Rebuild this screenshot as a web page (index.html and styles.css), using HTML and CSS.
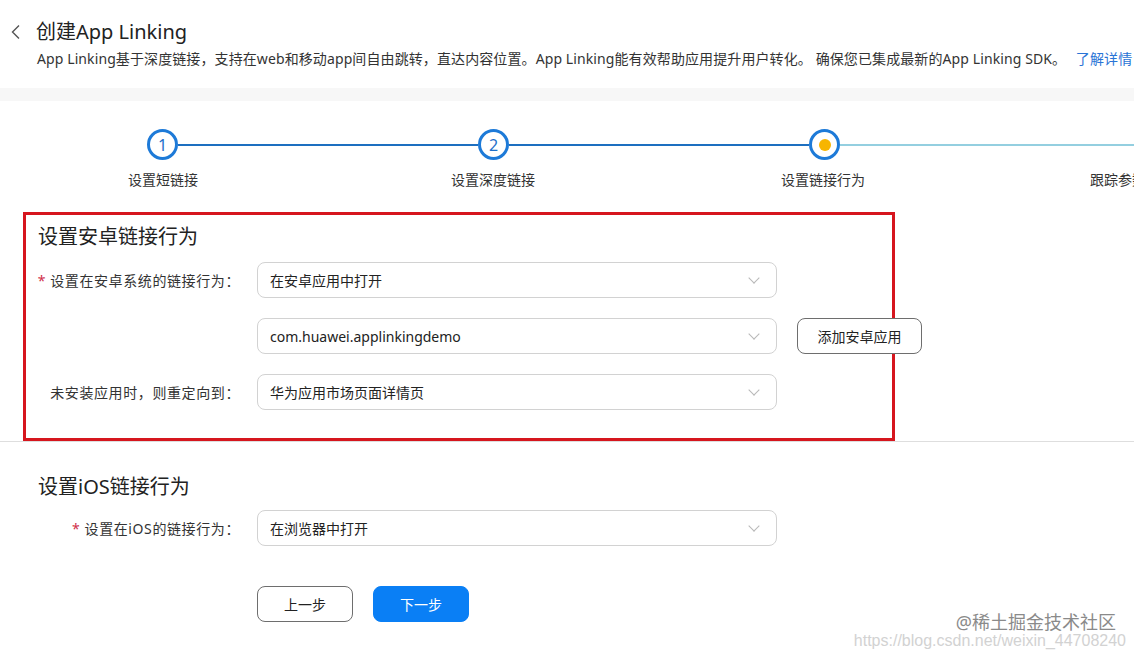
FILE: index.html
```html
<!DOCTYPE html>
<html lang="zh-CN">
<head>
    <meta charset="UTF-8">
    <meta name="viewport" content="width=device-width, initial-scale=1.0">
    <title>创建App Linking</title>
    <link rel="stylesheet" href="styles.css">
</head>
<body>
    <div class="page-header">
        <div class="title-row">
            <svg class="back-icon" width="12" height="16" viewBox="0 0 12 16"><polyline points="9,1.5 2.5,8 9,14.5" fill="none" stroke="#555" stroke-width="1.4"/></svg>
            <h1 class="title">创建App Linking</h1>
        </div>
        <p class="subtitle">App Linking基于深度链接，支持在web和移动app间自由跳转，直达内容位置。App Linking能有效帮助应用提升用户转化。 确保您已集成最新的App Linking SDK。 <a class="more-link" href="#">了解详情</a></p>
    </div>
    <div class="band"></div>

    <div class="stepper">
        <div class="track">
            <div class="dot done">1</div>
            <div class="line done"></div>
            <div class="dot done">2</div>
            <div class="line done"></div>
            <div class="dot current"><span class="dot-inner"></span></div>
            <div class="line pending"></div>
        </div>
        <div class="step-labels">
            <span>设置短链接</span>
            <span>设置深度链接</span>
            <span>设置链接行为</span>
            <span>跟踪参数及预览设置</span>
        </div>
    </div>

    <!-- android section, marked with the red frame -->
    <div class="section marked">
        <h2 class="section-title">设置安卓链接行为</h2>
        <div class="form-row">
            <label class="form-label"><i class="req">*</i> 设置在安卓系统的链接行为：</label>
            <div class="select">在安卓应用中打开<span class="chevron"></span></div>
        </div>
        <div class="form-row">
            <label class="form-label"></label>
            <div class="select">com.huawei.applinkingdemo<span class="chevron"></span></div>
            <button class="btn btn-outline btn-wide">添加安卓应用</button>
        </div>
        <div class="form-row">
            <label class="form-label">未安装应用时，则重定向到：</label>
            <div class="select">华为应用市场页面详情页<span class="chevron"></span></div>
        </div>
    </div>
    <div class="divider"></div>

    <div class="section">
        <h2 class="section-title">设置iOS链接行为</h2>
        <div class="form-row">
            <label class="form-label"><i class="req">*</i> 设置在iOS的链接行为：</label>
            <div class="select">在浏览器中打开<span class="chevron"></span></div>
        </div>
        <div class="actions">
            <button class="btn btn-outline">上一步</button>
            <button class="btn btn-primary">下一步</button>
        </div>
    </div>

    <div class="watermark">
        <span class="wm-main">@稀土掘金技术社区</span>
        <span class="wm-url">https://blog.csdn.net/weixin_44708240</span>
    </div>
</body>
</html>
```

FILE: styles.css
```css
body {
    margin: 0;
    width: 1134px;
    height: 654px;
    overflow: hidden;
    position: relative;
    background: #fff;
    color: #333;
    font-family: "Noto Sans", "Noto Sans CJK SC", sans-serif;
    font-size: 14px;
}
.page-header {
    padding: 18px 0 0 0;
    height: 88px;
    box-sizing: border-box;
}
.title-row {
    display: flex;
    align-items: center;
    height: 28px;
}
.back-icon {
    margin: 0 14px 0 10px; /* puts title at x=37 */
}
.title {
    margin: 0;
    font-size: 20px;
    font-weight: normal;
    color: #222;
    line-height: 28px;
}
.subtitle {
    margin: 3px 0 0 37px;
    line-height: 20px;
    white-space: nowrap;
    letter-spacing: 0.1px;
    color: #333;
}
.more-link {
    color: #2a74d6;
    text-decoration: none;
    margin-left: 6px;
}
.band {
    height: 13px;
    background: #f7f7f7;
}

/* stepper */
.stepper {
    padding-top: 28px;
}
.track {
    display: flex;
    align-items: center;
    padding-left: 147px;
}
.dot {
    width: 31px;
    height: 31px;
    box-sizing: border-box;
    border: 3px solid #1d7ad8;
    border-radius: 50%;
    flex-shrink: 0;
    display: flex;
    align-items: center;
    justify-content: center;
    color: #1d6fc9;
    font-size: 16px;
    line-height: 1;
}
.dot-inner {
    width: 12px;
    height: 12px;
    border-radius: 50%;
    background: #f7b500;
}
.line {
    height: 2px;
    width: 300px;
    flex-shrink: 0;
}
.line.done {
    background: #1d6fc0;
}
.line.pending {
    flex: 1;
    background: #94cfe0;
}
.step-labels {
    display: grid;
    grid-template-columns: repeat(4, 330px);
    margin: 10px 0 0 -2px;
    text-align: center;
    line-height: 20px;
    white-space: nowrap;
}

/* sections */
.section {
    padding: 9px 0 28px 0;
}
.section.marked {
    margin: 22px 0 0 23px;
    width: 866px;
    border: 3px solid #d6161e;
    position: relative;
    z-index: 1;
    padding-bottom: 28px;
    background: #fff;
}
.divider {
    height: 1px;
    background: #dedede;
}
.section-title {
    margin: 0 0 12px 12px;
    font-size: 20px;
    font-weight: normal;
    line-height: 26px;
    color: #222;
}
.section:not(.marked) {
    padding-top: 32px;
    padding-left: 26px;
}
.section:not(.marked) .section-title {
    margin-bottom: 10px;
}
.form-row {
    display: grid;
    grid-template-columns: 214px 520px auto;
    column-gap: 17px;
    align-items: center;
    margin-bottom: 20px;
}
.form-row:last-child {
    margin-bottom: 0;
}
.form-label {
    text-align: right;
    white-space: nowrap;
    letter-spacing: 0.6px;
    color: #333;
}
.req {
    font-style: normal;
    color: #d0304a;
}
.select {
    height: 36px;
    box-sizing: border-box;
    border: 1px solid #d2d2d2;
    border-radius: 8px;
    padding: 0 12px;
    display: flex;
    align-items: center;
    justify-content: space-between;
    color: #222;
}
.chevron {
    width: 7px;
    height: 7px;
    border-right: 1px solid #b8b8b8;
    border-bottom: 1px solid #b8b8b8;
    transform: rotate(45deg);
    margin: -4px 6px 0 0;
}
.btn {
    height: 36px;
    width: 96px;
    border-radius: 8px;
    font-family: inherit;
    font-size: 14px;
    cursor: pointer;
}
.btn-wide {
    width: 125px;
    margin-left: 3px;
}
.btn-outline {
    background: #fff;
    border: 1px solid #6e6e6e;
    color: #222;
}
.btn-primary {
    background: #0a7ff5;
    border: 1px solid #0a7ff5;
    color: #fff;
}
.actions {
    display: flex;
    gap: 20px;
    margin: 40px 0 0 231px;
}

/* screenshot watermark */
.watermark {
    position: absolute;
    right: 8px;
    bottom: 5px;
    display: flex;
    flex-direction: column;
    align-items: flex-end;
    z-index: 2;
}
.wm-main {
    font-size: 18px;
    line-height: 20px;
    color: #8a8a8a;
    margin-right: 10px;
}
.wm-url {
    font-family: "Liberation Sans", sans-serif;
    font-size: 16px;
    line-height: 17px;
    color: #d2d2d2;
}
```
